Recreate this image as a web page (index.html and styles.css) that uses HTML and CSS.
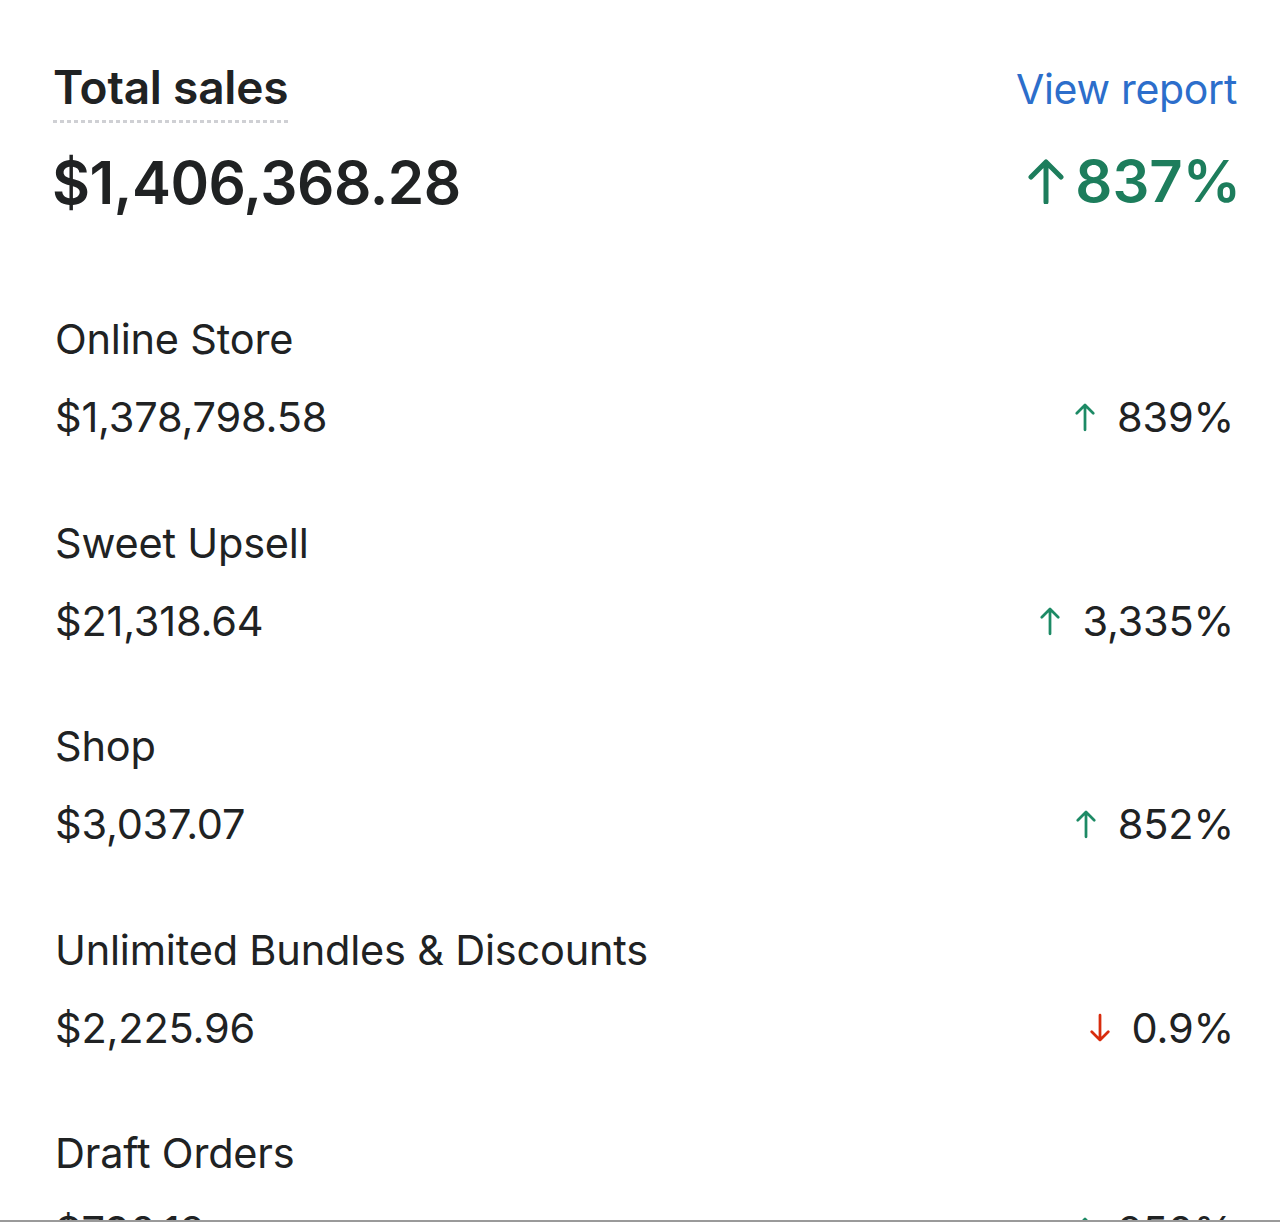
FILE: index.html
```html
<!DOCTYPE html>
<html>
<head>
<meta charset="utf-8">
<link rel="stylesheet" href="styles.css">
</head>
<body>
<div class="card">
  <div class="head">
    <div class="head-row">
      <span class="title">Total sales</span>
      <a class="link">View report</a>
    </div>
    <div class="head-row total-row">
      <span class="total">$1,406,368.28</span>
      <span class="total-change">
        <svg class="arrow big" viewBox="0 0 38 46"><path d="M19 44V4M4 19L19 4L34 19" fill="none" stroke="currentColor" stroke-width="5" stroke-linecap="round" stroke-linejoin="round"/></svg>837%
      </span>
    </div>
  </div>

  <div class="rows">
    <div class="item">
      <div class="label">Online Store</div>
      <div class="line">
        <span class="value">$1,378,798.58</span>
        <span class="change"><svg class="arrow up" viewBox="0 0 24 32"><path d="M12 30V3M3 12L12 3L21 12" fill="none" stroke="currentColor" stroke-width="3" stroke-linecap="round" stroke-linejoin="round"/></svg>839%</span>
      </div>
    </div>
    <div class="item">
      <div class="label">Sweet Upsell</div>
      <div class="line">
        <span class="value">$21,318.64</span>
        <span class="change"><svg class="arrow up" viewBox="0 0 24 32"><path d="M12 30V3M3 12L12 3L21 12" fill="none" stroke="currentColor" stroke-width="3" stroke-linecap="round" stroke-linejoin="round"/></svg>3,335%</span>
      </div>
    </div>
    <div class="item">
      <div class="label">Shop</div>
      <div class="line">
        <span class="value">$3,037.07</span>
        <span class="change"><svg class="arrow up" viewBox="0 0 24 32"><path d="M12 30V3M3 12L12 3L21 12" fill="none" stroke="currentColor" stroke-width="3" stroke-linecap="round" stroke-linejoin="round"/></svg>852%</span>
      </div>
    </div>
    <div class="item">
      <div class="label">Unlimited Bundles &amp; Discounts</div>
      <div class="line">
        <span class="value">$2,225.96</span>
        <span class="change"><svg class="arrow down" viewBox="0 0 24 32"><path d="M12 2V29M3 20L12 29L21 20" fill="none" stroke="currentColor" stroke-width="3" stroke-linecap="round" stroke-linejoin="round"/></svg>0.9%</span>
      </div>
    </div>
    <div class="item">
      <div class="label">Draft Orders</div>
      <div class="line">
        <span class="value">$790.12</span>
        <span class="change"><svg class="arrow up" viewBox="0 0 24 32"><path d="M12 30V3M3 12L12 3L21 12" fill="none" stroke="currentColor" stroke-width="3" stroke-linecap="round" stroke-linejoin="round"/></svg>250%</span>
      </div>
    </div>
  </div>
</div>
<div class="bottom-bar"></div>
</body>
</html>
```

FILE: styles.css
```css
html, body {
  margin: 0;
  padding: 0;
  background: #ffffff;
}
body {
  height: 1222px;
  overflow: hidden;
  position: relative;
  font-family: Inter, "Noto Sans", "Liberation Sans", sans-serif;
  color: #202223;
}
.card {
  padding: 57px 43px 0 53px;
}
.head-row {
  display: flex;
  justify-content: space-between;
  align-items: baseline;
}
.title {
  font-size: 46px;
  font-weight: 600;
  line-height: 60px;
  letter-spacing: -0.2px;
  padding-bottom: 6px;
  background-image: linear-gradient(to right, #cfd0d4 4px, transparent 4px);
  background-size: 7px 3px;
  background-repeat: repeat-x;
  background-position: 0 100%;
}
.link {
  font-size: 41px;
  color: #2c6ecb;
  line-height: 60px;
  letter-spacing: -0.3px;
}
.total-row {
  margin-top: 22px;
}
.total {
  font-size: 58.5px;
  font-weight: 600;
  line-height: 72px;
  letter-spacing: -0.5px;
  margin-left: -1px;
}
.total-change {
  font-size: 58px;
  font-weight: 600;
  color: #1d7d5c;
  line-height: 72px;
  display: inline-flex;
  align-items: center;
  margin-right: -4px;
}
.arrow.big {
  width: 38px;
  height: 46px;
  margin-right: 10px;
  color: #1d7d5c;
}
.rows {
  padding-top: 92px;
  padding-right: 3px;
  padding-left: 2px;
}
.item {
  height: 203.5px;
}
.label {
  font-size: 41.5px;
  line-height: 56px;
  letter-spacing: -0.2px;
}
.line {
  margin-top: 22px;
  display: flex;
  justify-content: space-between;
  align-items: center;
}
.value {
  font-size: 41.5px;
  line-height: 56px;
  letter-spacing: -0.2px;
}
.change {
  font-size: 41.5px;
  line-height: 56px;
  display: inline-flex;
  align-items: center;
  letter-spacing: -0.2px;
}
.arrow {
  width: 22px;
  height: 30px;
  margin-right: 21px;
}
.arrow.up {
  color: #1d8a65;
}
.arrow.down {
  color: #d82c0d;
}
.bottom-bar {
  position: absolute;
  left: 0;
  right: 0;
  bottom: 0;
  height: 2px;
  background: #9a9a9a;
}
```
